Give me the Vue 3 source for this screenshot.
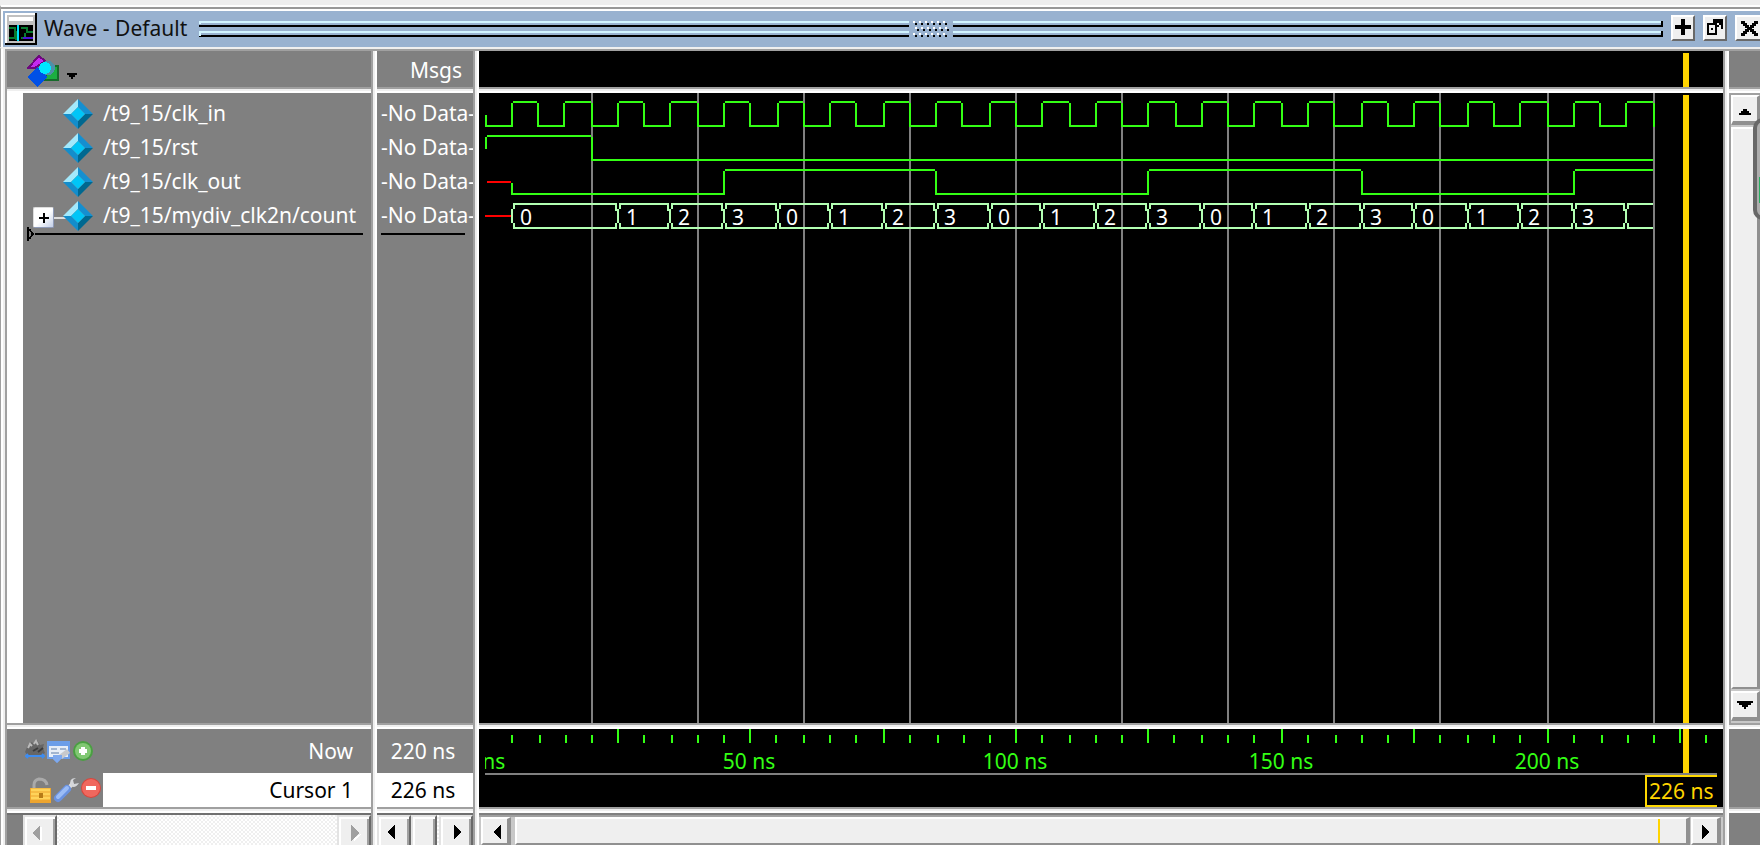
<script setup>
const UNIT = 2
const ORIGIN = 6
const END = 220
const CURSOR = 226

const px = (t) => ORIGIN + UNIT * Math.floor(t * 2.655)
const box = (x, y, w, h) => `M${x} ${y}h${w}v${h}h${-w}z`

const signals = [
  { name: '/t9_15/clk_in', value: '-No Data-' },
  { name: '/t9_15/rst', value: '-No Data-' },
  { name: '/t9_15/clk_out', value: '-No Data-' },
  { name: '/t9_15/mydiv_clk2n/count', value: '-No Data-', bus: true },
]

// Each edge is [time, level after the edge]; top is the y of the high level.
function trace(edges, top, closed) {
  const low = top + 24
  let d = ''
  edges.forEach(([t, level], i) => {
    const next = i + 1 < edges.length ? edges[i + 1][0] : END
    const a = px(t)
    const b = px(next)
    if (i > 0) d += box(a, top + 2, 2, 24)
    d += level ? box(a + 2, top, b - a - 2, 2) : box(a, low, b - a, 2)
  })
  if (closed) d += box(px(END), top + 2, 2, 24)
  return d
}

const clkEdges = []
for (let t = 0; t < END; t += 5) clkEdges.push([t, (t / 5) % 2])
const clk = trace(clkEdges, 8, true) + box(ORIGIN, 22, 2, 12)
const rst = trace([[0, 1], [20, 0]], 42) + box(ORIGIN, 44, 2, 12)
const out =
  trace([[5, 0], [45, 1], [85, 0], [125, 1], [165, 0], [205, 1]], 76) +
  box(px(5), 90, 2, 12)

const busTimes = [5]
for (let t = 25; t < END; t += 10) busTimes.push(t)
const cells = busTimes.map((t, i) => ({
  x: px(t),
  end: px(busTimes[i + 1] ?? END),
  last: i === busTimes.length - 1,
  label: i === busTimes.length - 1 ? '' : String(i % 4),
}))
const bus = cells
  .map(({ x, end, last }) => {
    let d = box(x + 2, 110, end - x - 2, 2) + box(x + 2, 134, end - x - 2, 2)
    d += box(x, 116, 2, 14) + box(x + 2, 112, 2, 4) + box(x + 2, 130, 2, 4)
    if (!last) d += box(end - 2, 112, 2, 6) + box(end - 2, 130, 2, 4)
    return d
  })
  .join('')

const gridLines = []
for (let t = 20; t <= END; t += 20) gridLines.push(px(t))

// Minor ticks are laid out from the major tick before them.
const MINOR = [0, 13, 27, 40, 53]
const ticks = []
for (let t = 5; t <= 230; t += 5) {
  const step = (t / 5) % 5
  ticks.push({ x: px(t - step * 5) + UNIT * MINOR[step], major: step === 0 })
}
const labels = [0, 50, 100, 150, 200]
const cursorX = px(CURSOR) - 2

const dots = [0, 1, 2, 3, 4, 5].flatMap((i) => [
  [6 * i, 0],
  [6 * i + 2, 6],
  [6 * i, 12],
])
</script>

<template>
  <main class="window">
    <header class="title-bar">
      <svg class="app-icon" width="32" height="32" shape-rendering="crispEdges" aria-hidden="true">
        <rect width="32" height="32" fill="#000" />
        <rect width="30" height="30" fill="#fff" />
        <rect x="2" y="2" width="28" height="28" fill="#c0c0c0" />
        <rect x="4" y="4" width="24" height="4" fill="#fff" />
        <rect x="4" y="12" width="24" height="16" fill="#000" />
        <path d="M4 15h6v4h2M4 25h6v-4h2v5h-2M16 15h6v4h6M16 25h4v-5" fill="none" stroke="#087c30" stroke-width="2" />
        <path d="M13 12v16" stroke="#00e5ff" stroke-width="2" />
        <path d="M18 25h10" stroke="#4b16d8" stroke-width="2" />
      </svg>
      <h1>Wave - Default</h1>
      <i class="grip grip-start"></i>
      <svg class="dots" width="36" height="16" shape-rendering="crispEdges" aria-hidden="true">
        <g v-for="(d, i) in dots" :key="i">
          <rect :x="d[0]" :y="d[1]" width="2" height="2" fill="#fff" />
          <rect :x="d[0] + 2" :y="d[1] + 2" width="2" height="2" fill="#000" />
        </g>
      </svg>
      <i class="grip grip-end"></i>
      <button class="tool" aria-label="Maximize">
        <svg width="16" height="16" shape-rendering="crispEdges"><path d="M6 0h4v6h6v4h-6v6H6v-6H0V6h6z" /></svg>
      </button>
      <button class="tool" aria-label="Undock">
        <svg width="16" height="16" shape-rendering="crispEdges">
          <path d="M6 0h10v10h-2V6h-2v2h-2v2H8V8h2V6h2V4H6z" />
          <path d="M1 5h8v10H1zM5 9v2M8 9h2" fill="none" stroke="#000" stroke-width="2" />
        </svg>
      </button>
      <button class="tool tool-close" aria-label="Close">
        <svg width="18" height="16" shape-rendering="crispEdges">
          <path d="M1 1h3v2h2v2h2v2h2V5h2V3h2V1h3v2h-2v2h-2v2h-2v2h2v2h2v2h2v2h-3v-2h-2v-2h-2V9H8v2H6v2H4v2H1v-2h2v-2h2V9h2V7H5V5H3V3H1z" stroke="#000" />
        </svg>
      </button>
    </header>

    <div class="panes">
      <section class="column names">
        <div class="head name-head">
          <svg width="52" height="34" shape-rendering="crispEdges" aria-hidden="true">
            <path d="M20 11h11v14H18z" fill="#1cae41" stroke="#176b2b" stroke-width="2" />
            <path d="M1 13L12 1l6 5-10 7z" fill="#c52af0" stroke="#6d087d" stroke-width="2" />
            <circle cx="21" cy="13" r="7" fill="#4e90a8" />
            <path d="M10 12l10 10-10 10L0 22z" fill="#0050e6" />
            <circle cx="18" cy="13" r="6" fill="#00e8ff" />
            <path d="M40 18h10v2h-2v2h-2v2h-2v-2h-2v-2h-2z" fill="#000" />
          </svg>
        </div>
        <div class="split-h"></div>
        <div class="name-body">
          <ul class="rows">
            <li v-for="s in signals" :key="s.name">
              <span class="branch">
                <button v-if="s.bus" class="expand" aria-label="Expand">
                  <svg width="10" height="10" shape-rendering="crispEdges"><path d="M4 0h2v4h4v2H6v4H4V6H0V4h4z" /></svg>
                </button>
                <i v-if="s.bus" class="link"></i>
              </span>
              <svg class="gem" width="30" height="30" viewBox="0 0 30 30" aria-hidden="true">
                <path d="M15 0v8l-7 7H0z" fill="#a3e9fc" />
                <path d="M15 0l15 15h-8l-7-7z" fill="#158fd0" />
                <path d="M0 15h8l7 7v8z" fill="#138dcb" />
                <path d="M30 15L15 30v-8l7-7z" fill="#006890" />
                <path d="M15 8l7 7-7 7-7-7z" fill="#00c5f7" />
              </svg>
              <span class="label">{{ s.name }}</span>
            </li>
          </ul>
          <div class="insert">
            <svg width="8" height="14" shape-rendering="crispEdges" aria-hidden="true">
              <path d="M1 0v14M2 2l4 5-4 5" fill="none" stroke="#000" stroke-width="2" />
            </svg>
            <i></i>
          </div>
        </div>
        <div class="split-h"></div>
        <div class="foot">
          <div class="foot-now">
            <svg class="foot-icons" width="70" height="24" aria-hidden="true">
              <path d="M0 13L3 6l4-3 2 3 3-5 3 5 4-1-1 4 2 5-3 2H2z" fill="#666" />
              <path d="M3 9l2-4 2 2M9 5l2-3 2 4" stroke="#bbb" stroke-width="2" fill="none" />
              <path d="M8 12l5-3M13 13l5-4" stroke="#3c3c3c" stroke-width="2" />
              <path d="M1 17h18M3 15l-2 2 2 2M17 15l2 2-2 2" stroke="#3d8cf0" stroke-width="2" fill="none" />
              <path d="M22 2h23v18h-9l-4 4-4-4h-6z" fill="#6c9ee8" />
              <path d="M24 7h19v11H24z" fill="#e7eef7" />
              <path d="M26 10h6M26 14h8M35 10h6" stroke="#a2b5cf" stroke-width="2" />
              <path d="M34 16l8-6 3 4-8 6z" fill="#c7c9cc" />
              <path d="M28 16h9v3l-5 5-4-4z" fill="#7ea9ee" />
              <circle cx="58" cy="12" r="10" fill="#4a9f42" />
              <circle cx="58" cy="12" r="8" fill="#81c873" />
              <path d="M54 12h8M58 8v8" stroke="#fff" stroke-width="4" />
            </svg>
            <span>Now</span>
          </div>
          <div class="foot-cursor">
            <svg class="foot-icons" width="80" height="28" aria-hidden="true">
              <path d="M9 13V9q0-5 5-6 7 0 8 6" fill="none" stroke="#aaa" stroke-width="3" />
              <rect x="5" y="12" width="21" height="15" fill="#eda52e" />
              <path d="M6 14h19M6 18h19M6 22h19" stroke="#ffd35a" stroke-width="3" />
              <rect x="14" y="17" width="4" height="5" fill="#b77b17" />
              <path d="M42 14l6-7" stroke="#ddd" stroke-width="4" />
              <path d="M51 2q-8 0-5 8 4 3 8-3l-5 1-1-4z" fill="#d5d7da" />
              <path d="M33 22l9-9" stroke="#6a92e0" stroke-width="8" stroke-linecap="round" />
              <path d="M33 21l9-9" stroke="#9bbcf5" stroke-width="4" stroke-linecap="round" />
              <circle cx="66" cy="12" r="10" fill="#d8453c" />
              <circle cx="66" cy="12" r="9" fill="#f0685e" />
              <path d="M61 12h10" stroke="#fff" stroke-width="4" />
            </svg>
            <span>Cursor 1</span>
          </div>
        </div>
        <div class="split-h"></div>
        <div class="scroll scroll-names">
          <button class="arrow dim" aria-label="Scroll names left"><svg width="10" height="16" shape-rendering="crispEdges"><path d="M0 8L8 0v16z" /><path class="hi" d="M8 2h2v14H8z" /></svg></button>
          <i class="trough"></i>
          <button class="arrow dim" aria-label="Scroll names right"><svg width="10" height="16" shape-rendering="crispEdges"><path class="hi" d="M10 9L3 16v-3z" /><path d="M8 8L0 0v16z" /></svg></button>
        </div>
      </section>

      <div class="split-v"></div>

      <section class="column values">
        <div class="head value-head">Msgs</div>
        <div class="split-h"></div>
        <div class="value-body">
          <ul class="rows">
            <li v-for="s in signals" :key="s.name"><span class="label">{{ s.value }}</span></li>
          </ul>
          <div class="value-line"></div>
        </div>
        <div class="split-h"></div>
        <div class="foot">
          <div class="value-now">220 ns</div>
          <div class="value-cursor">226 ns</div>
        </div>
        <div class="split-h"></div>
        <div class="scroll">
          <button class="arrow" aria-label="Scroll values left"><svg width="8" height="14" shape-rendering="crispEdges"><path d="M0 7L8 0v14z" /></svg></button>
          <i class="thumb"></i>
          <i class="trough"></i>
          <button class="arrow" aria-label="Scroll values right"><svg width="8" height="14" shape-rendering="crispEdges"><path d="M8 7L0 0v14z" /></svg></button>
        </div>
      </section>

      <div class="split-v"></div>

      <section class="column waves">
        <svg class="plot" shape-rendering="crispEdges" aria-hidden="true">
          <rect :x="cursorX" y="2" width="6" height="34" class="gold" />
        </svg>
        <div class="split-h"></div>
        <svg class="plot">
          <g shape-rendering="crispEdges">
            <rect v-for="x in gridLines" :key="x" :x="x" y="0" width="2" height="100%" fill="#808080" />
            <path :d="clk" class="green" />
            <path :d="rst" class="green" />
            <path :d="out" class="green" />
            <rect :x="ORIGIN + 2" y="88" :width="px(5) - ORIGIN - 2" height="2" fill="#f00" />
            <rect :x="ORIGIN" y="122" :width="px(5) - ORIGIN" height="2" fill="#f00" />
            <path :d="bus" fill="#b2ffb2" />
            <rect :x="cursorX" y="2" width="6" height="100%" class="gold" />
          </g>
          <text v-for="c in cells" :key="c.x" :x="c.x + 9" y="132" fill="#fff">{{ c.label }}</text>
        </svg>
        <div class="split-h"></div>
        <div class="ruler">
          <svg class="plot">
            <g shape-rendering="crispEdges">
              <rect v-for="t in ticks" :key="t.x" :x="t.x" :y="t.major ? 0 : 6" width="2" :height="t.major ? 14 : 8" class="green" />
              <rect x="0" y="44" width="100%" height="2" fill="#808080" />
              <rect :x="cursorX" y="0" width="6" height="44" class="gold" />
              <rect :x="cursorX - 37" y="47" width="90" height="30" fill="#000" stroke="#ffd800" stroke-width="2" />
            </g>
            <text v-for="n in labels" :key="n" :x="px(n)" y="40" text-anchor="middle" class="green">{{ n }} ns</text>
            <text :x="cursorX - 34" y="70" class="gold">226 ns</text>
          </svg>
        </div>
        <div class="split-h"></div>
        <div class="scroll scroll-wave">
          <button class="arrow" aria-label="Scroll waves left"><svg width="8" height="14" shape-rendering="crispEdges"><path d="M0 7L8 0v14z" /></svg></button>
          <div class="thumb"><i class="marker"></i></div>
          <button class="arrow" aria-label="Scroll waves right"><svg width="8" height="14" shape-rendering="crispEdges"><path d="M8 7L0 0v14z" /></svg></button>
        </div>
      </section>

      <div class="split-v"></div>

      <section class="column side">
        <div class="head"></div>
        <div class="split-h"></div>
        <div class="vscroll">
          <button class="arrow arrow-up" aria-label="Scroll up"><svg width="12" height="6" shape-rendering="crispEdges"><path d="M4 0h4v2h2v2h2v2H0V4h2V2h2z" /></svg></button>
          <i class="thumb"></i>
          <button class="arrow" aria-label="Scroll down"><svg width="16" height="8" shape-rendering="crispEdges"><path d="M0 0h16v2h-2v2h-3v2h-2v2H7V6H5V4H2V2H0z" /></svg></button>
          <div class="handle"><i></i></div>
        </div>
        <div class="split-h"></div>
        <div class="foot"></div>
        <div class="split-h"></div>
        <div class="foot"></div>
      </section>
    </div>
  </main>
</template>

<style>
body {
  margin: 0;
  overflow: hidden;
  background: #efefef;
}
</style>

<style scoped>
* {
  box-sizing: border-box;
}
.window {
  display: flex;
  flex-direction: column;
  height: 100vh;
  padding-top: 5px;
  overflow: hidden;
  background: #efefef;
  font: 21px/34px "Noto Sans", "Open Sans", sans-serif;
  color: #fff;
}
button {
  padding: 0;
  margin: 0;
  border-radius: 0;
  flex: none;
}
svg {
  display: block;
  flex: none;
}
.title-bar {
  display: flex;
  align-items: flex-start;
  flex: none;
  height: 42px;
  border-left: 1px solid #a0a0a0;
  border-top: 2px solid #fff;
  box-shadow: inset 0 2px #999, inset 0 4px #fff, inset 2px 0 #fff;
  background: #99b2d0;
  padding-left: 4px;
  color: #111;
}
.app-icon {
  margin-top: 6px;
}
h1 {
  margin: 4px 12px 0 7px;
  font: inherit;
  white-space: nowrap;
}
.grip {
  flex: 1;
  height: 16px;
  margin-top: 14px;
  background: linear-gradient(#d2f4ff 0 2px, transparent 2px 4px, #000 4px 6px, transparent 6px 10px, #d2f4ff 10px 12px, transparent 12px 14px, #000 14px 16px);
}
.grip-start {
  border-left: 2px solid #d2f4ff;
  border-image: linear-gradient(#d2f4ff 0 4px, transparent 4px 10px, #d2f4ff 10px 14px, transparent 14px) 1;
}
.grip-end {
  border-right: 2px solid #000;
  border-image: linear-gradient(#000 0 6px, transparent 6px 10px, #000 10px 16px) 1;
}
.dots {
  margin: 14px 4px 0;
}
.tool {
  display: flex;
  justify-content: center;
  width: 24px;
  height: 26px;
  margin: 8px 0 0 8px;
  padding-top: 2px;
  background: #efefef;
  border: 2px solid #fff;
  border-right-color: #696969;
  border-bottom-color: #696969;
}
.tool-close {
  width: 25px;
  border-right: 0;
  padding-top: 3px;
}
.panes {
  display: flex;
  flex: 1;
  min-height: 0;
  border-top: 2px solid #efefef;
  border-left: 1px solid #a0a0a0;
  padding: 2px 0 0 6px;
  box-shadow: inset 2px 0 #fff, inset 4px 0 #efefef, inset 0 2px #a0a0a0;
  background: #a0a0a0;
}
.column {
  display: grid;
  grid-template-rows: 36px 6px minmax(0, 1fr) 6px 78px 6px 32px;
  grid-template-columns: minmax(0, 1fr);
  flex: none;
  min-width: 0;
  background: #808080;
}
.names {
  width: 364px;
}
.values {
  width: 96px;
}
.waves {
  flex: 1;
  background: #000;
}
.side {
  width: 31px;
}
.split-h {
  background: linear-gradient(#a0a0a0 0 2px, #efefef 2px 4px, #fff 4px);
}
.split-v {
  flex: none;
  width: 6px;
  background: linear-gradient(90deg, #a0a0a0 0 2px, #efefef 2px 4px, #fff 4px);
}
.name-head {
  padding: 4px 0 0 20px;
}
.value-head {
  padding-right: 11px;
  text-align: right;
  line-height: 38px;
}
.name-body {
  border-left: 16px solid #fff;
}
.rows {
  list-style: none;
  margin: 0;
  padding: 4px 0 0;
}
.rows li {
  display: flex;
  align-items: center;
  height: 34px;
  white-space: nowrap;
}
.label {
  padding-bottom: 3px;
}
.branch {
  display: flex;
  align-items: center;
  width: 40px;
  padding-left: 10px;
}
.gem {
  margin-right: 10px;
}
.expand {
  display: flex;
  align-items: center;
  justify-content: center;
  width: 21px;
  height: 21px;
  margin-top: 3px;
  border: 1px solid #8f9bb8;
  border-top-color: #ddd;
  border-left-color: #ddd;
  border-radius: 2px;
  background: linear-gradient(135deg, #fff 50%, #c3cfe8);
}
.link {
  flex: 1;
  height: 2px;
  margin-right: -3px;
  margin-top: 3px;
  background: #ddd;
}
.insert {
  display: flex;
  align-items: center;
  height: 14px;
  margin: -6px 8px 0 4px;
}
.insert i {
  flex: 1;
  height: 2px;
  background: #000;
}
.value-body .rows li {
  padding-left: 4px;
}
.value-line {
  height: 2px;
  margin: 0 8px 0 4px;
  background: #000;
}
.foot {
  min-width: 0;
}
.foot-now,
.foot-cursor {
  display: flex;
  align-items: center;
  justify-content: space-between;
}
.foot-now {
  height: 44px;
  padding: 0 18px;
}
.foot-cursor {
  height: 34px;
  padding: 0 18px;
  color: #000;
  background: linear-gradient(90deg, #808080 96px, #fff 96px);
}
.value-now,
.value-cursor {
  padding-right: 4px;
  text-align: center;
}
.value-now {
  line-height: 44px;
}
.value-cursor {
  background: #fff;
  color: #000;
}
.plot {
  width: 100%;
  height: 100%;
  overflow: hidden;
}
.green {
  fill: #33ff14;
}
.gold {
  fill: #ffd400;
}
.ruler {
  overflow: hidden;
  padding: 0 6px 0 0;
  clip-path: inset(0 0 0 6px);
}
.scroll {
  display: flex;
  overflow: hidden;
  border-top: 2px solid #707070;
}
.scroll-names {
  padding-left: 16px;
}
.scroll .arrow,
.scroll .thumb {
  height: 40px;
  background: #efefef;
  border: 2px solid #e3e3e3;
  border-right-color: #696969;
  box-shadow: inset 2px 2px #fff, inset -2px 0 #a0a0a0;
}
.scroll .arrow {
  display: flex;
  justify-content: center;
  width: 34px;
  padding: 8px 6px 0 0;
}
.scroll .arrow:last-child {
  padding: 8px 0 0 4px;
}
.scroll .thumb {
  width: 26px;
}
.dim {
  fill: #a0a0a0;
}
.hi {
  fill: #fff;
}
.trough {
  flex: 1;
  background: repeating-conic-gradient(#efefef 0 25%, #fff 0 50%) 0 0 / 4px 4px;
}
.scroll-wave {
  border-top-color: #808080;
  background: #c8c8c8;
  box-shadow: inset 0 2px #a0a0a0;
  padding: 2px 2px 0;
}
.scroll-wave .arrow,
.scroll-wave .thumb {
  height: 28px;
  border: 2px solid #fff;
  border-right: 4px solid #909090;
  border-bottom: 2px solid #909090;
  box-shadow: none;
}
.scroll-wave .arrow {
  width: 30px;
  padding: 6px 0 0 4px;
}
.scroll-wave .arrow:last-child {
  padding: 6px 0 0 2px;
}
.scroll-wave .thumb {
  display: flex;
  justify-content: flex-end;
  flex: 1;
  margin: 0 1px 0 4px;
}
.marker {
  width: 2px;
  height: 24px;
  margin-right: 26px;
  background: #ffd400;
}
.vscroll {
  position: relative;
  display: flex;
  flex-direction: column;
  gap: 2px;
  overflow: hidden;
  padding: 2px 0 2px 2px;
  background: #c8c8c8;
  box-shadow: inset 2px 0 #a0a0a0, inset 0 2px #a0a0a0;
}
.vscroll .arrow,
.vscroll .thumb {
  background: #efefef;
  border: 2px solid #fff;
  border-right: 3px solid #909090;
  border-bottom: 4px solid #909090;
}
.vscroll .arrow {
  display: flex;
  align-items: center;
  justify-content: center;
  height: 30px;
}
.vscroll .arrow-up {
  padding-top: 6px;
}
.vscroll .thumb {
  flex: 1;
  border-bottom-width: 2px;
}
.handle {
  position: absolute;
  top: 25px;
  right: -20px;
  width: 27px;
  height: 102px;
  display: flex;
  align-items: center;
  padding: 48px 0 6px 2px;
  border: 4px solid #686868;
  border-radius: 10px;
  background: #adadad;
}
.handle i {
  width: 12px;
  height: 26px;
  background: #27ae60;
}
</style>
